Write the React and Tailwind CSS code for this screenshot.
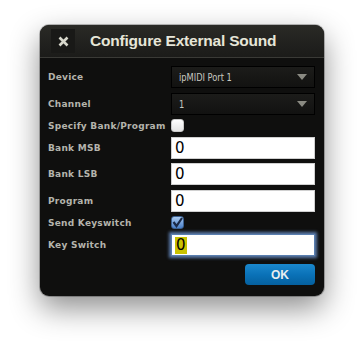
import React from "react";

const labelCls = "text-[9px] font-bold text-[#b4b4ac] tracking-[0.25px] whitespace-nowrap pt-[2px] [font-family:'DejaVu_Sans',sans-serif] w-[123px] shrink-0";

function Dropdown({ value }) {
  return (
    <div className="flex-1 h-[22px] border border-black bg-gradient-to-b from-[#1c1c1a] to-[#121211] flex items-center pl-[7px] pr-[7px] justify-between">
      <span className="text-[10px] text-[#c8c8c0] [font-family:'Liberation_Sans_Narrow','DejaVu_Sans_Condensed',sans-serif] scale-x-[0.92] origin-left">{value}</span>
      <svg width="10" height="6" viewBox="0 0 10 6"><path d="M0 0 H10 L5 6 Z" fill="#8a8a82" /></svg>
    </div>
  );
}

function TextInput({ focused }) {
  return (
    <div className={
      "flex-1 h-[22px] bg-white flex items-center pl-[3px] " +
      (focused ? "border border-[#5a7fb0] shadow-[0_0_3px_2px_rgba(110,150,210,0.8)]" : "border border-[#d0d0d0]")
    }>
      <span className={"text-[15px] leading-[17px] text-black [font-family:'DejaVu_Sans',sans-serif] " + (focused ? "bg-[#c9c200] px-[1px]" : "")}>0</span>
    </div>
  );
}

function Checkbox({ checked }) {
  return (
    <div className={
      "w-[13px] h-[13px] rounded-[3px] flex items-center justify-center " +
      (checked ? "bg-gradient-to-b from-[#a8c8ee] to-[#4a80c8] border border-[#3a5f90]" : "bg-gradient-to-b from-white to-[#e4e4e4] border border-[#c8c8c8]")
    }>
      {checked && (
        <svg width="11" height="11" viewBox="0 0 11 11"><path d="M1.5 5 L4.5 9 L10 1" stroke="#1a2a48" strokeWidth="2.2" fill="none" /></svg>
      )}
    </div>
  );
}

function Row({ label, children, h, mt }) {
  return (
    <div className={"flex items-center " + h + " " + mt}>
      <div className={labelCls}>{label}</div>
      {children}
    </div>
  );
}

export default function App() {
  return (
    <div className="w-[364px] h-[351px] bg-white pt-[25px] pl-[40px]">
      <div className="w-[284px] h-[271px] rounded-[9px] bg-[#0f0f0e] overflow-hidden shadow-[0_12px_30px_rgba(0,0,0,0.45),0_0_0_1px_rgba(0,0,0,0.25)] flex flex-col">
        <div className="h-[33px] bg-gradient-to-b from-[#2a2a26] to-[#1b1b19] border-b border-[#3a3a36] flex items-center pl-[11px]">
          <div className="w-[24px] h-[24px] bg-[#191917] flex items-center justify-center">
            <svg width="11" height="11" viewBox="0 0 11 11"><path d="M1.5 1.5 L9.5 9.5 M9.5 1.5 L1.5 9.5" stroke="#d8d8cc" strokeWidth="2.6" /></svg>
          </div>
          <div className="ml-[15px] text-[15.5px] font-bold text-[#e6e6d8] [font-family:'Liberation_Sans',sans-serif] tracking-[-0.2px]">Configure External Sound</div>
        </div>
        <div className="flex flex-col pl-[8px] pr-[9px]">
          <Row label="Device" h="h-[22px]" mt="mt-[8px]"><Dropdown value="ipMIDI Port 1" /></Row>
          <Row label="Channel" h="h-[22px]" mt="mt-[5px]"><Dropdown value="1" /></Row>
          <Row label="Specify Bank/Program" h="h-[13px]" mt="mt-[4px]"><Checkbox /></Row>
          <Row label="Bank MSB" h="h-[22px]" mt="mt-[5px]"><TextInput /></Row>
          <Row label="Bank LSB" h="h-[22px]" mt="mt-[4px]"><TextInput /></Row>
          <Row label="Program" h="h-[22px]" mt="mt-[5px]"><TextInput /></Row>
          <Row label="Send Keyswitch" h="h-[13px]" mt="mt-[4px]"><Checkbox checked /></Row>
          <Row label="Key Switch" h="h-[22px]" mt="mt-[5px]"><TextInput focused /></Row>
          <div className="flex justify-end mt-[8px]">
            <div className="w-[70px] h-[21px] rounded-[4px] bg-gradient-to-b from-[#1a88cc] via-[#0a72b8] to-[#05609e] flex items-center justify-center">
              <span className="text-[12px] font-bold text-[#e8eef0] [font-family:'Liberation_Sans',sans-serif]">OK</span>
            </div>
          </div>
        </div>
      </div>
    </div>
  );
}
